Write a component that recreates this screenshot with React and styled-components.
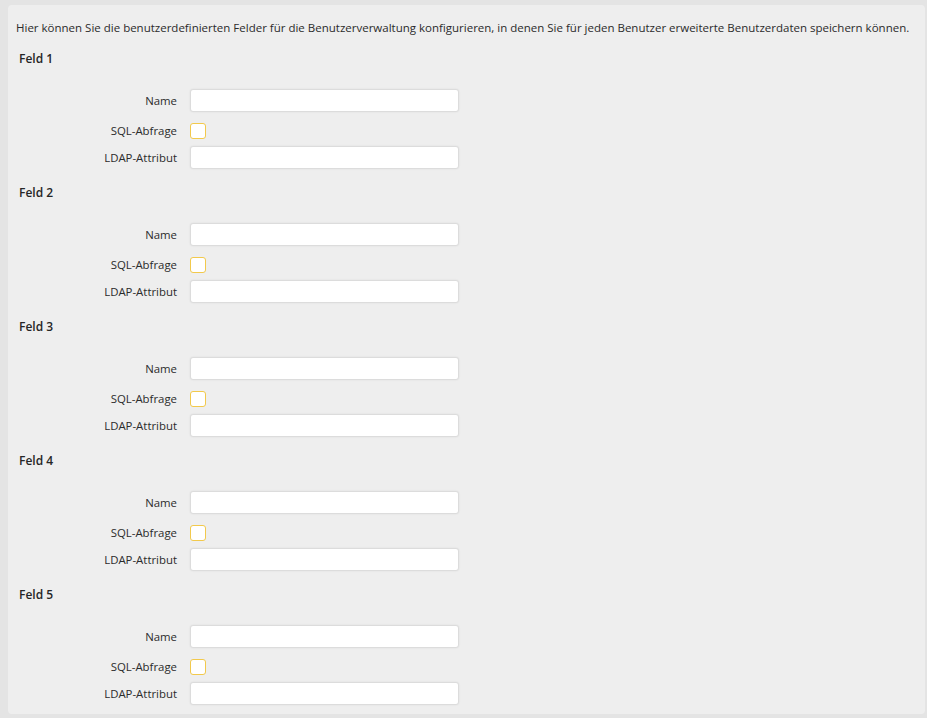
import React from "react";
import styled, { createGlobalStyle } from "styled-components";

const GlobalStyle = createGlobalStyle`
  html, body {
    margin: 0;
    background: #e4e4e4;
  }
  body {
    padding: 5px 2px 4px 8px;
    font-family: "Open Sans", "Noto Sans", sans-serif;
    font-size: 11.4px;
    color: #2b2b2b;
  }
`;

const Panel = styled.div`
  background: #eeeeee;
  border-radius: 4px;
  padding: 14px 0 9px 0;
`;

const Intro = styled.p`
  margin: 0 0 13px 8px;
  font-size: 11.5px;
  line-height: 18px;
  white-space: nowrap;
`;

const Group = styled.section`
  margin-bottom: 15px;
  &:last-child {
    margin-bottom: 0;
  }
`;

const GroupTitle = styled.h3`
  margin: 0 0 21px 11px;
  font-size: 12px;
  font-weight: 600;
  line-height: 18px;
  color: #262626;
`;

const Row = styled.div`
  display: grid;
  grid-template-columns: 169px 269px;
  column-gap: 13px;
  align-items: center;
  height: ${({ $h }) => $h}px;
  margin-bottom: ${({ $mb }) => $mb || 0}px;
`;

const Label = styled.label`
  text-align: right;
  line-height: 18px;
  white-space: nowrap;
`;

const TextInput = styled.input`
  box-sizing: border-box;
  width: 269px;
  height: 23px;
  margin: 0;
  border: 1px solid #dcdcdc;
  border-radius: 3px;
  background: #fff;
  box-shadow: 0 0 2px rgba(0, 0, 0, 0.08);
  outline: none;
  font-family: inherit;
  font-size: 12px;
`;

const Check = styled.span`
  box-sizing: border-box;
  display: block;
  width: 16px;
  height: 16px;
  border: 1px solid #f2c94c;
  border-radius: 3px;
  background: #fff;
`;

const fields = [1, 2, 3, 4, 5];

const App = () => (
  <>
    <GlobalStyle />
    <Panel>
      <Intro>
        Hier können Sie die benutzerdefinierten Felder für die Benutzerverwaltung konfigurieren, in denen Sie für jeden Benutzer erweiterte Benutzerdaten speichern können.
      </Intro>
      {fields.map((n) => (
        <Group key={n}>
          <GroupTitle>Feld {n}</GroupTitle>
          <Row $h={23} $mb={10}>
            <Label>Name</Label>
            <TextInput type="text" />
          </Row>
          <Row $h={16} $mb={8}>
            <Label>SQL-Abfrage</Label>
            <Check />
          </Row>
          <Row $h={23}>
            <Label>LDAP-Attribut</Label>
            <TextInput type="text" />
          </Row>
        </Group>
      ))}
    </Panel>
  </>
);

export default App;
